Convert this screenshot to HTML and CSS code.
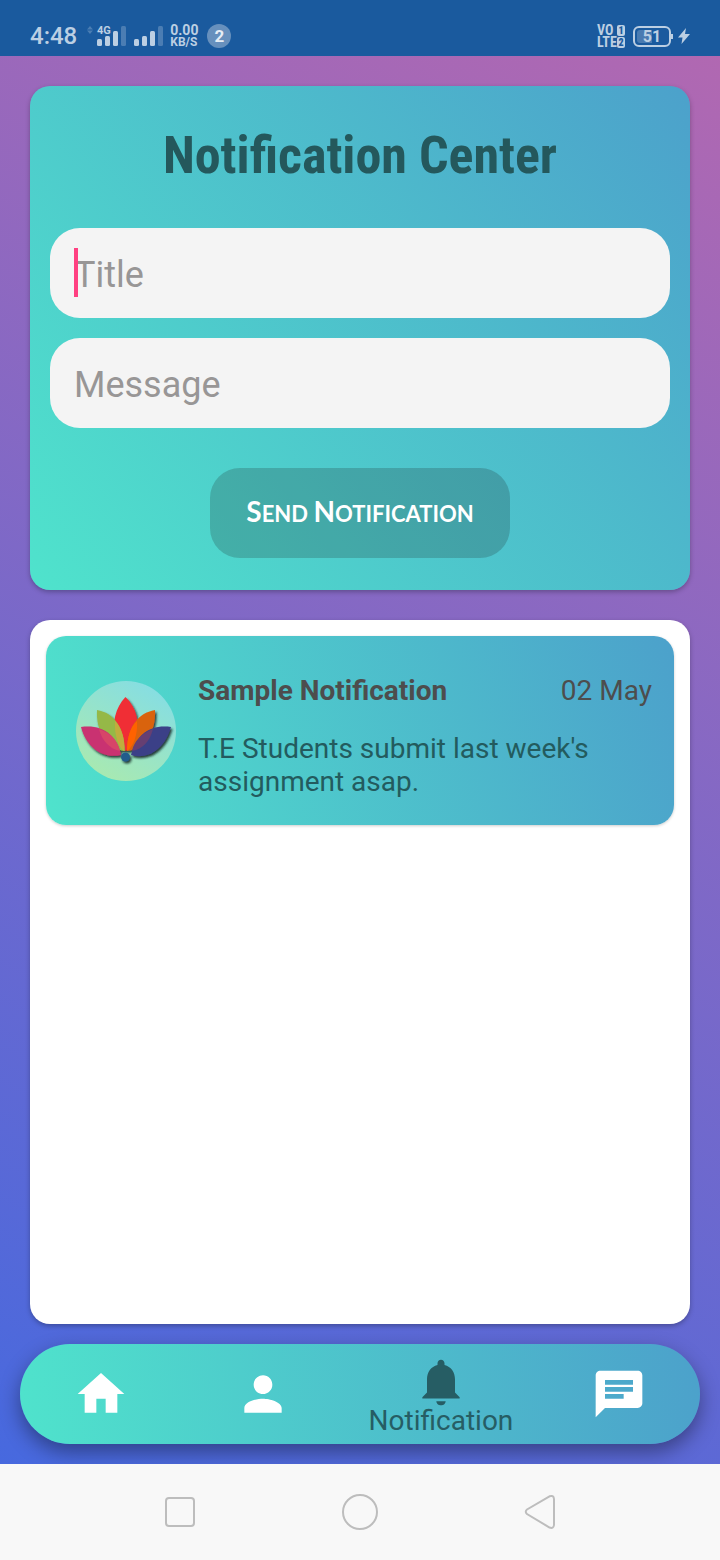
FILE: index.html
```html
<!DOCTYPE html>
<html lang="en">
<head>
<meta charset="utf-8">
<meta name="viewport" content="width=device-width, initial-scale=1">
<title>Notification Center</title>
<link rel="stylesheet" href="styles.css">
</head>
<body>
<div class="screen">
  <header class="status">
    <time class="clock">4:48</time>
    <svg class="signals" width="76" height="24" viewBox="0 -2 76 24" fill="currentColor" aria-hidden="true">
      <path opacity=".3" d="M3 0l3 3.500H0zM3 8l3-3.500H0z"/>
      <text class="network" x="10" y="8">4G</text>
      <rect x="10" y="13" width="5" height="7" rx="1.500"/>
      <rect x="18" y="10" width="5" height="10" rx="1.500"/>
      <rect x="26" y="5" width="5" height="15" rx="1.500"/>
      <rect x="34" y="0" width="5" height="20" rx="1.500" opacity=".3"/>
      <rect x="47" y="13" width="5" height="7" rx="1.500"/>
      <rect x="55" y="10" width="5" height="10" rx="1.500"/>
      <rect x="63" y="5" width="5" height="15" rx="1.500"/>
      <rect x="71" y="0" width="5" height="20" rx="1.500" opacity=".3"/>
    </svg>
    <div class="speed"><span class="rate">0.00</span><span>KB/S</span></div>
    <span class="count">2</span>
    <div class="volte">
      <span>VO</span><b class="sim">1</b>
      <span>LTE</span><b class="sim">2</b>
    </div>
    <div class="battery"><span class="level">51</span></div>
    <svg class="bolt" width="12" height="18" viewBox="0 0 12 18" fill="currentColor" aria-hidden="true"><path d="M8 1L0 10.500h4.500L3.500 17 12 7H7z"/></svg>
  </header>

  <main class="content">
    <form class="card composer">
      <h1 class="heading">Notification Center</h1>
      <div class="field">
        <input class="input" type="text" placeholder="Title" aria-label="Title">
        <span class="caret"></span>
      </div>
      <div class="field">
        <input class="input" type="text" placeholder="Message" aria-label="Message">
      </div>
      <button class="send" type="button"><span class="word">Send</span> <span class="word">Notification</span></button>
    </form>

    <section class="card list">
      <article class="item">
        <svg class="logo" width="100" height="100" viewBox="0 0 100 100" role="img" aria-label="Lotus">
          <defs>
            <linearGradient id="disc" x1="0.200" y1="1" x2="0.800" y2="0">
              <stop offset="0" stop-color="#aaeaae"/>
              <stop offset="1" stop-color="#84dde5"/>
            </linearGradient>
            <filter id="drop" x="-20%" y="-20%" width="150%" height="150%">
              <feDropShadow dx="1.500" dy="2" stdDeviation="1.200" flood-color="#122" flood-opacity=".85"/>
            </filter>
          </defs>
          <circle cx="50" cy="50" r="50" fill="url(#disc)"/>
          <g filter="url(#drop)">
            <path fill="#f02d35" d="M49.500 16C61 27 64 42 59 54C57 62 53 67 50 70C46 67 42 62 40 54C36 42 39 27 49.500 16z"/>
            <path fill="#95b847" d="M21 29C38 32 48 46 49 70C30 68 20 50 21 29z"/>
            <path fill="#d9640f" d="M79 29C62 32 51 46 51 70C70 68 80 50 79 29z"/>
            <path fill="#c93071" d="M5 46C26 43 41 54 45 74C28 78 11 68 5 46z"/>
            <path fill="#3b3f87" d="M95 46C74 43 60 54 55 74C72 79 89 68 95 46z"/>
            <circle cx="49.500" cy="76" r="4.500" fill="#245c8c"/>
          </g>
          <path fill="#c0ad3d" d="M39 40C46 47 49 58 48 70C43 67 38 55 39 40z"/>
          <path fill="#ff6200" d="M61 40C54 46 51 57 51 70C57 66 62 54 61 40z"/>
          <path fill="#d74568" d="M23 48C35 52 42 60 44 70C34 68 26 60 23 48z"/>
          <path fill="#663f72" d="M77 48C66 52 58 60 56 70C67 68 74 60 77 48z"/>
        </svg>
        <div class="body">
          <div class="row">
            <h2 class="title">Sample Notification</h2>
            <time class="date">02 May</time>
          </div>
          <p class="message">T.E Students submit last week's assignment asap.</p>
        </div>
      </article>
    </section>
  </main>

  <nav class="tabs" aria-label="Main">
    <a class="tab" href="#home" aria-label="Home"><svg class="icon" viewBox="0 0 24 24"><path d="M10 20v-6h4v6h5v-8h3L12 3 2 12h3v8z"/></svg></a>
    <a class="tab" href="#profile" aria-label="Profile"><svg class="icon" viewBox="0 0 24 24"><path d="M12 12c2.210 0 4-1.790 4-4s-1.790-4-4-4-4 1.790-4 4 1.790 4 4 4zm0 2c-2.670 0-8 1.340-8 4v2h16v-2c0-2.660-5.330-4-8-4z"/></svg></a>
    <a class="tab active" href="#notification" aria-current="page"><svg class="icon" viewBox="0 0 24 24"><path d="M12 22c1.100 0 2-.9 2-1.800h-4c0 .9.890 1.800 2 1.800zM18 16.500V10.800c0-3.070-1.700-5.400-4.500-6.120V4c0-.83-.67-1.500-1.500-1.500s-1.500.67-1.500 1.500v.68C7.700 5.400 6 7.730 6 10.800v5.700l-2 2v.6h16v-.6z"/></svg><span class="label">Notification</span></a>
    <a class="tab" href="#chat" aria-label="Chat"><svg class="icon" viewBox="0 0 24 24"><path d="M20 2H4c-1.100 0-1.990.9-1.990 2L2 22l4-4h14c1.100 0 2-.9 2-2V4c0-1.100-.9-2-2-2zM6 9h12v2H6V9zm8 5H6v-2h8v2zm4-6H6V6h12v2z"/></svg></a>
  </nav>

  <footer class="system">
    <button class="key" type="button" aria-label="Recent apps"><svg width="40" height="40" viewBox="0 0 40 40"><rect x="6" y="6" width="28" height="28" rx="3"/></svg></button>
    <button class="key" type="button" aria-label="Home screen"><svg width="40" height="40" viewBox="0 0 40 40"><circle cx="20" cy="20" r="17"/></svg></button>
    <button class="key" type="button" aria-label="Back"><svg width="40" height="40" viewBox="0 0 40 40"><path d="M29.500 4.300L7 17.500Q4.500 19.500 7 22L29.500 35.500Q33.500 37 34 33V7Q33.500 2.800 29.500 4.300z"/></svg></button>
  </footer>
</div>
</body>
</html>
```

FILE: styles.css
```css
* {
  box-sizing: border-box;
}

body {
  margin: 0;
  font-family: Roboto, "Liberation Sans", sans-serif;
}

h1, h2, p {
  margin: 0;
}

.screen {
  min-height: 100vh;
  display: flex;
  flex-direction: column;
  background: linear-gradient(27deg, #4169e1, #b468b0);
}

.status {
  display: flex;
  align-items: center;
  height: 56px;
  padding: 16px 30px 0;
  background: #1a5a9e;
  color: #bccfe3;
}

.clock {
  font-size: 24px;
  line-height: 28px;
  font-weight: 500;
}

.signals {
  margin: 0 7px 0 10px;
  overflow: visible;
}

.network {
  font-size: 11px;
  font-weight: 700;
}

.speed {
  display: flex;
  flex-direction: column;
  font-size: 12px;
  line-height: 12px;
  font-weight: 700;
}

.rate {
  font-size: 14px;
}

.count {
  width: 24px;
  height: 24px;
  margin-left: 9px;
  border-radius: 50%;
  background: #6790bd;
  color: #e6edf5;
  font-size: 17px;
  line-height: 24px;
  font-weight: 700;
  text-align: center;
}

.volte {
  display: grid;
  grid-template-columns: 20px 8px;
  row-gap: 1px;
  margin-left: auto;
  font-family: "Roboto Condensed", Roboto, sans-serif;
  font-size: 14px;
  line-height: 11px;
  font-weight: 700;
}

.sim {
  border-radius: 2px;
  background: #bccfe3;
  color: #1a5a9e;
  font-size: 10px;
  text-align: center;
}

.battery {
  position: relative;
  width: 38px;
  height: 21px;
  margin: 0 7px 0 8px;
  padding: 2px;
  border: 2px solid #bccfe3;
  border-radius: 6px;
}

.battery::after {
  content: "";
  position: absolute;
  right: -4px;
  top: 6px;
  width: 2px;
  height: 5px;
  background: #bccfe3;
}

.level {
  display: block;
  border-radius: 3px;
  background: linear-gradient(90deg, #4a7bb1 50%, transparent 50%);
  font-size: 16px;
  line-height: 13px;
  font-weight: 700;
  text-align: center;
}

.content {
  flex: 1;
  display: flex;
  flex-direction: column;
  gap: 30px;
  padding: 30px 30px 20px;
}

.card {
  border-radius: 20px;
  box-shadow: 0 2px 5px rgba(0, 0, 0, .28);
}

.composer {
  display: flex;
  flex-direction: column;
  gap: 20px;
  padding: 40px 20px 32px;
  background: linear-gradient(53deg, #4fe3cc, #4ca1cb);
}

.heading {
  margin-bottom: 22px;
  color: #24585c;
  font-family: "Roboto Condensed", "Liberation Sans Narrow", Roboto, sans-serif;
  font-size: 52px;
  line-height: 60px;
  font-weight: 700;
  text-align: center;
}

.field {
  position: relative;
}

.input {
  display: block;
  width: 100%;
  height: 90px;
  padding: 4px 24px 0;
  border: 0;
  border-radius: 30px;
  background: #f4f4f4;
  color: #222;
  font: 400 36px/42px Roboto, "Liberation Sans", sans-serif;
}

.input::placeholder {
  color: #989696;
}

.caret {
  position: absolute;
  left: 24px;
  top: 20px;
  width: 4px;
  height: 49px;
  background: #ff4081;
}

.send {
  align-self: center;
  width: 300px;
  height: 90px;
  margin-top: 20px;
  padding: 0 0 4px;
  border: 0;
  border-radius: 30px;
  background: rgba(24, 24, 24, .2);
  color: #fff;
  font-family: Lato, "Open Sans", sans-serif;
  font-size: 22px;
  font-weight: 700;
}

.word {
  display: inline-block;
  text-transform: uppercase;
}

.word::first-letter {
  font-size: 28px;
}

.list {
  flex: 1;
  padding: 16px;
  background: #fff;
}

.item {
  display: flex;
  align-items: center;
  gap: 22px;
  padding: 38px 22px 27px 30px;
  border-radius: 20px;
  background: linear-gradient(73deg, #4fe3cc, #4ca1cb);
  box-shadow: 0 1px 3px rgba(0, 0, 0, .2);
  font-size: 28px;
  line-height: 33px;
}

.logo {
  flex: none;
  align-self: flex-start;
  margin-top: 7px;
}

.body {
  flex: 1;
}

.row {
  display: flex;
  justify-content: space-between;
  margin-bottom: 25px;
  color: #4d4d4d;
}

.title {
  font-size: 28px;
  font-weight: 700;
}

.message {
  color: #235b5e;
}

.tabs {
  display: flex;
  height: 100px;
  margin: 0 20px 20px;
  border-radius: 50px;
  background: linear-gradient(82deg, #4fe3cc, #4ca1cb);
  box-shadow: 0 8px 20px rgba(0, 0, 0, .38);
}

.tab {
  flex: 5;
  display: flex;
  flex-direction: column;
  align-items: center;
  justify-content: center;
  color: #fff;
  text-decoration: none;
}

.active {
  flex: 6;
  justify-content: flex-start;
  padding-top: 10px;
  color: #265d64;
}

.icon {
  flex: none;
  width: 56px;
  height: 56px;
  fill: currentColor;
}

.label {
  margin-top: -6px;
  font-size: 28px;
  line-height: 33px;
}

.system {
  position: relative;
  display: grid;
  grid-template-columns: repeat(3, 1fr);
  height: 96px;
  padding: 0 12.5%;
  background: #f8f8f8;
}

.key {
  display: flex;
  align-items: center;
  justify-content: center;
  padding: 0;
  border: 0;
  background: none;
}

.key svg {
  fill: none;
  stroke: #bdbdbd;
  stroke-width: 2;
}
```
